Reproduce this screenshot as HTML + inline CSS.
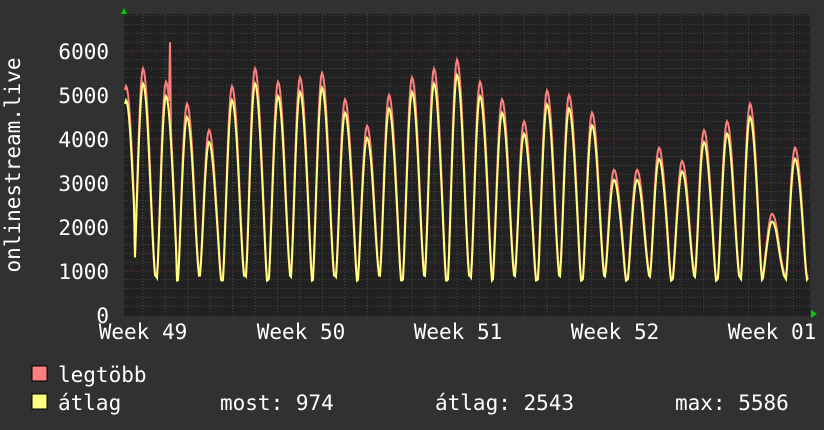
<!DOCTYPE html>
<html><head><meta charset="utf-8"><style>
html,body{margin:0;padding:0;background:#313131;width:824px;height:430px;overflow:hidden}
svg text{font-family:"DejaVu Sans Mono","Liberation Mono",monospace;fill:#fff}
</style></head><body>
<svg id="g" width="824" height="430" xmlns="http://www.w3.org/2000/svg">
<rect x="0" y="0" width="824" height="430" fill="#313131"/>
<rect x="124" y="14" width="686" height="302" fill="#212121"/>
<g id="grid"></g>
<polyline id="mx" fill="none" stroke="#ff7f7f" stroke-width="2"/>
<polyline id="av" fill="none" stroke="#ffff80" stroke-width="2"/>
<polygon points="121,14 127,14 124,8" fill="#00cc00"/>
<polygon points="811,310 811,318 817,314" fill="#00cc00"/>
<g font-size="21" text-anchor="end">
<text x="109" y="59">6000</text><text x="109" y="103">5000</text><text x="109" y="147">4000</text>
<text x="109" y="191">3000</text><text x="109" y="235">2000</text><text x="109" y="279">1000</text>
<text x="109" y="323">0</text></g>
<g font-size="21" text-anchor="middle">
<text x="143" y="339">Week 49</text><text x="301" y="339">Week 50</text><text x="458" y="339">Week 51</text>
<text x="615" y="339">Week 52</text><text x="772" y="339">Week 01</text></g>
<text font-size="21" transform="translate(20,165) rotate(-90)" text-anchor="middle">onlinestream.live</text>
<rect x="32" y="366" width="15" height="15" fill="#ff7f7f" stroke="#000"/>
<rect x="32" y="394" width="15" height="15" fill="#ffff80" stroke="#000"/>
<g font-size="21"><text x="58" y="382">legtöbb</text><text x="58" y="410">átlag</text>
<text x="220" y="410">most: 974</text><text x="435" y="410">átlag: 2543</text><text x="675" y="410">max: 5586</text></g>
</svg>
<script>
var g=document.getElementById("grid"),h="";
for(var v=200;v<=6800;v+=200){var y=315-v*0.044;if(y<14)break;var maj=v%1000==0;
h+='<line x1="124" x2="810" y1="'+y+'" y2="'+y+'" stroke="'+(maj?'#7a3a3a':'#4a4a4a')+'" stroke-dasharray="1,2"/>';}
for(var x=143-22.43;x<810;x+=22.43){if(x<124)continue;
h+='<line y1="14" y2="316" x1="'+x+'" x2="'+x+'" stroke="#4a4a4a" stroke-dasharray="1,2"/>';}
g.innerHTML=h;
var pk=[[126,5200],[143,5600],[166,5300],[187,4800],[209,4200],[232,5200],[255,5600],[278,5300],[300,5400],[322,5500],[345,4900],[367,4300],[389,5000],[412,5400],[434,5600],[457,5800],[480,5300],[502,4900],[524,4400],[547,5100],[569,5000],[592,4600],[614,3300],[637,3300],[659,3800],[682,3500],[704,4200],[727,4400],[750,4800],[772,2300],[795,3800]];
var mx=[],av=[];
for(var x=125;x<=808;x++){var best=pk[0];for(var i=0;i<pk.length;i++){if(Math.abs(pk[i][0]-x)<Math.abs(best[0]-x))best=pk[i];}
var d=x-best[0];var t=d<0?d/9:d/12;var s=Math.max(0,Math.cos(Math.min(Math.abs(t),1)*Math.PI/2));s=Math.pow(s,1.3);
var base=900+60*Math.sin(x*0.7);var vm=base+(best[1]-base)*s;if(Math.abs(x-170)<1)vm=6200;
var va=base-60+(best[1]*0.95-base)*s;
mx.push(x+","+(315-vm*0.044).toFixed(1));av.push(x+","+(315-va*0.044).toFixed(1));}
document.getElementById("mx").setAttribute("points",mx.join(" "));
document.getElementById("av").setAttribute("points",av.join(" "));
</script>
</body></html>
